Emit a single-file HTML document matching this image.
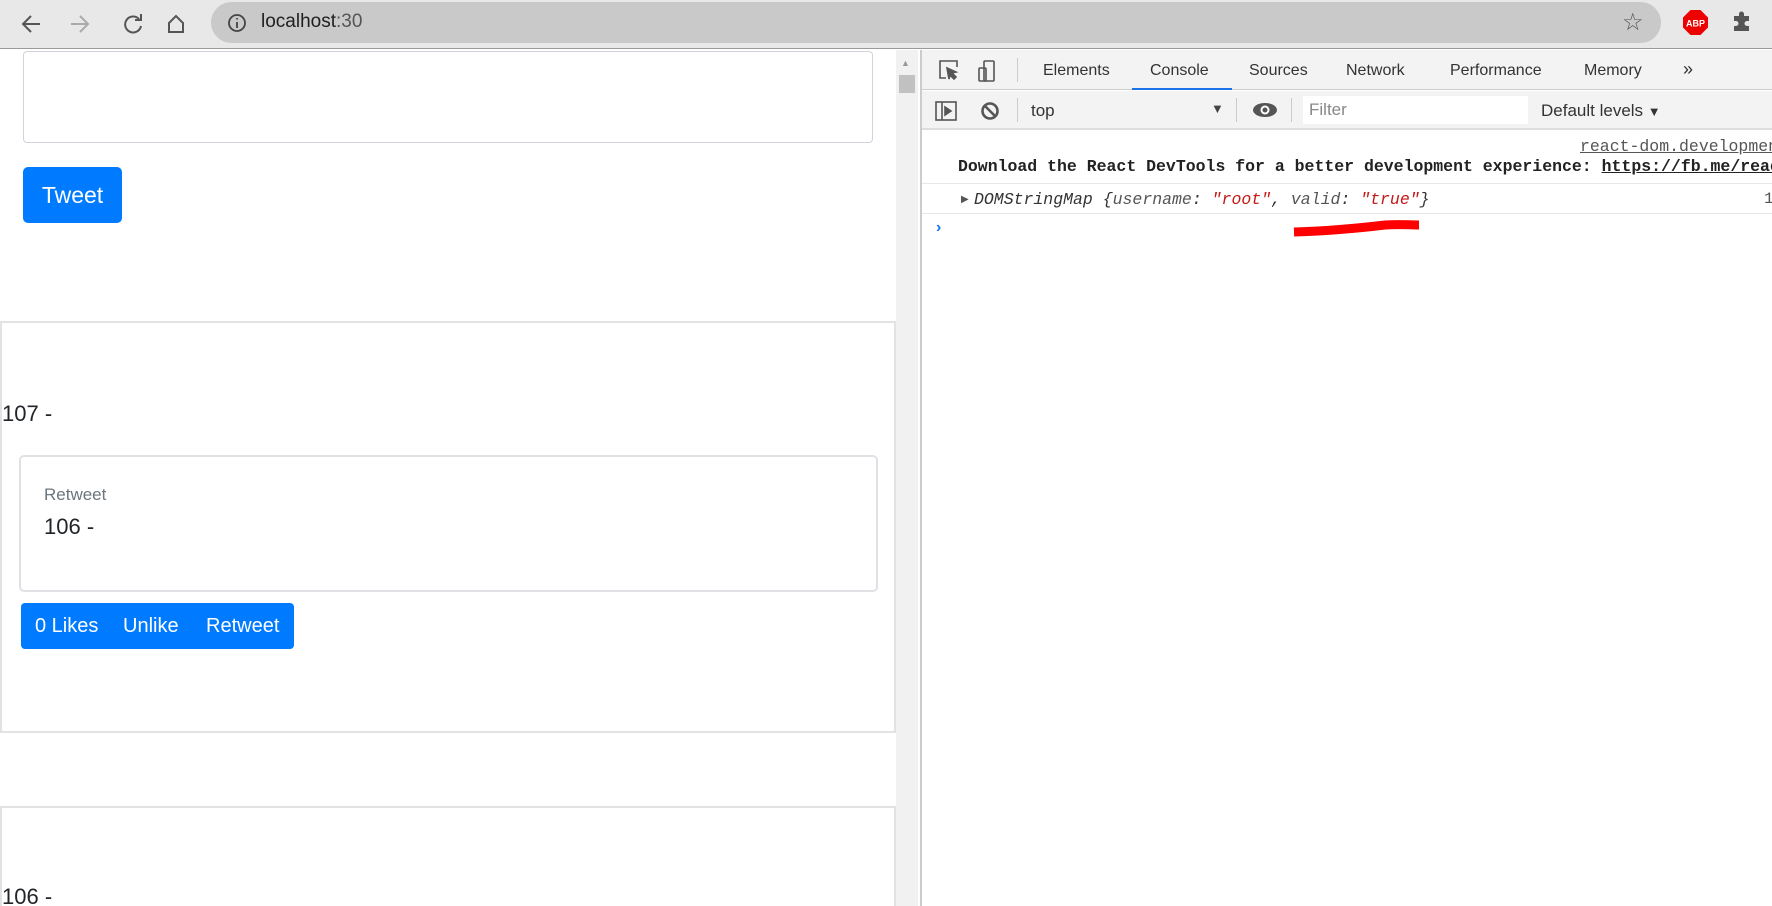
<!DOCTYPE html>
<html style="overflow:hidden"><head><meta charset="utf-8"><style>
*{box-sizing:border-box;margin:0;padding:0}
html,body{width:1772px;height:906px;overflow:hidden}
body{background:#fff;font-family:"Liberation Sans",sans-serif;position:relative}
.a{position:absolute}
.mono{font-family:"Liberation Mono",monospace}
.tab{position:absolute;top:62px;font-size:16px;color:#333}
</style></head><body>
<div class="a" style="left:0;top:0;width:1772px;height:49px;background:#e8e8e8;border-bottom:1px solid #9a9a9a"></div>
<svg class="a" style="left:20px;top:11px" width="200" height="26" viewBox="0 0 200 26" fill="none" stroke="#555" stroke-width="2">
<path d="M20 13H4M11 5L3 13l8 8"/>
<path d="M51 13h16M60 5l8 8-8 8" stroke="#aaa"/>
<path d="M119 8a8 8 0 1 0 2 7" /><path d="M121 3v6h-6" />
<path d="M149 12l7-7 7 7v9h-14z"/>
</svg>
<div class="a" style="left:211px;top:2px;width:1450px;height:41px;background:#c9c9c9;border-radius:21px"></div>
<svg class="a" style="left:227px;top:13px" width="20" height="20" viewBox="0 0 20 20" fill="none" stroke="#444" stroke-width="1.8"><circle cx="10" cy="10" r="8"/><path d="M10 9v6M10 5v1.5"/></svg>
<div class="a" style="left:261px;top:11px;font-size:19px;color:#202020">localhost<span style="color:#555">:30</span></div>
<div class="a" style="left:1622px;top:8px;font-size:24px;color:#555">☆</div>
<svg class="a" style="left:1683px;top:10px" width="25" height="25" viewBox="0 0 25 25"><polygon points="7.5,0 17.5,0 25,7.5 25,17.5 17.5,25 7.5,25 0,17.5 0,7.5" fill="#e00"/><text x="12.5" y="16.5" font-size="9" font-weight="bold" fill="#fff" text-anchor="middle" font-family="Liberation Sans">ABP</text></svg>
<svg class="a" style="left:1730px;top:10px" width="24" height="24" viewBox="0 0 24 24" fill="#555"><path d="M4 6h5V4a2.5 2.5 0 0 1 5 0v2h5v5h-2a2.5 2.5 0 0 0 0 5h2v5H4v-5h2a2.5 2.5 0 0 0 0-5H4z"/></svg>

<div class="a" style="left:23px;top:51px;width:850px;height:92px;border:1px solid #ced4da;border-radius:4px"></div>
<div class="a" style="left:23px;top:167px;width:99px;height:56px;background:#007bff;border-radius:5px;color:#fff;font-size:23px;line-height:56px;text-align:center">Tweet</div>
<div class="a" style="left:0;top:321px;width:896px;height:412px;border:2px solid #e2e2e2"></div>
<div class="a" style="left:2px;top:401px;font-size:22px;color:#212529">107 -</div>
<div class="a" style="left:19px;top:455px;width:859px;height:137px;border:2px solid #dfe1e5;border-radius:5px"></div>
<div class="a" style="left:44px;top:485px;font-size:17px;color:#6c757d">Retweet</div>
<div class="a" style="left:44px;top:514px;font-size:22px;color:#212529">106 -</div>
<div class="a" style="left:21px;top:603px;width:273px;height:46px;background:#007bff;border-radius:4px;color:#fff;font-size:20px;line-height:46px;white-space:nowrap">
<span class="a" style="left:14px">0 Likes</span><span class="a" style="left:102px">Unlike</span><span class="a" style="left:185px">Retweet</span></div>
<div class="a" style="left:0;top:806px;width:896px;height:100px;border:2px solid #e2e2e2;border-bottom:none"></div>
<div class="a" style="left:2px;top:884px;font-size:22px;color:#212529">106 -</div>
<div class="a" style="left:896px;top:50px;width:22px;height:856px;background:#f1f1f1"></div>
<div class="a" style="left:901px;top:58px;font-size:9px;color:#999">▲</div>
<div class="a" style="left:899px;top:75px;width:16px;height:18px;background:#c1c1c1"></div>

<div class="a" style="left:920px;top:50px;width:2px;height:856px;background:#ccc"></div>
<div class="a" style="left:922px;top:50px;width:850px;height:40px;background:#f3f3f3;border-bottom:1px solid #ccc"></div>
<svg class="a" style="left:937px;top:58px" width="60" height="26" viewBox="0 0 60 26" fill="none" stroke="#555" stroke-width="1.6">
<path d="M9 20H3V3h17v6"/><path d="M10 10l9 4-4 1 4 4-2 2-4-4-1 4z" fill="#555"/>
<rect x="47" y="3" width="10" height="20" rx="1"/><rect x="42" y="10" width="7" height="13" rx="1"/>
</svg>
<div class="a" style="left:1017px;top:58px;width:1px;height:24px;background:#ccc"></div>
<div class="tab" style="left:1043px">Elements</div>
<div class="tab" style="left:1150px">Console</div>
<div class="tab" style="left:1249px">Sources</div>
<div class="tab" style="left:1346px">Network</div>
<div class="tab" style="left:1450px">Performance</div>
<div class="tab" style="left:1584px">Memory</div>
<div class="tab" style="left:1683px;font-size:18px;top:59px">»</div>
<div class="a" style="left:1132px;top:88px;width:100px;height:2px;background:#1a73e8"></div>
<div class="a" style="left:922px;top:91px;width:850px;height:39px;background:#f3f3f3;border-bottom:2px solid #ddd"></div>
<svg class="a" style="left:934px;top:99px" width="70" height="24" viewBox="0 0 70 24" fill="none" stroke="#555" stroke-width="1.6">
<rect x="2" y="3" width="20" height="18"/><path d="M8 3v18"/><path d="M11 8l6 4-6 4z" fill="#555"/>
<circle cx="56" cy="12" r="7.5" stroke-width="2.6"/><path d="M50.5 6.5l11 11" stroke-width="2.6"/>
</svg>
<div class="a" style="left:1017px;top:98px;width:1px;height:24px;background:#ccc"></div>
<div class="a" style="left:1031px;top:101px;font-size:17px;color:#333">top</div>
<div class="a" style="left:1211px;top:101px;font-size:13px;color:#444">▼</div>
<div class="a" style="left:1236px;top:98px;width:1px;height:24px;background:#ccc"></div>
<svg class="a" style="left:1252px;top:101px" width="26" height="18" viewBox="0 0 26 18"><ellipse cx="13" cy="9" rx="12" ry="7" fill="#555"/><circle cx="13" cy="9" r="4.5" fill="#fff"/><circle cx="13" cy="9" r="2.5" fill="#555"/></svg>
<div class="a" style="left:1291px;top:98px;width:1px;height:24px;background:#ccc"></div>
<div class="a" style="left:1303px;top:96px;width:225px;height:28px;background:#fff;padding-left:6px;font-size:17px;color:#888;line-height:28px">Filter</div>
<div class="a" style="left:1541px;top:101px;font-size:17px;color:#333">Default levels <span style="font-size:13px">▼</span></div>

<div class="a" style="left:922px;top:130px;width:850px;height:776px;overflow:hidden">
<div class="a mono" style="left:658px;top:7px;font-size:16.5px;color:#555;text-decoration:underline;white-space:nowrap">react-dom.development.js</div>
<div class="a mono" style="left:36px;top:27px;font-size:16.5px;font-weight:bold;color:#222;white-space:nowrap">Download the React DevTools for a better development experience: <span style="text-decoration:underline">https://fb.me/react-devtools</span></div>
<div class="a" style="left:0;top:53px;width:850px;height:1px;background:#e6e6e6"></div>
<div class="a" style="left:39px;top:64px;font-size:10px;color:#555">▶</div>
<div class="a mono" style="left:52px;top:60px;font-size:16.5px;font-style:italic;color:#333;white-space:nowrap">DOMStringMap {<span style="color:#555">username</span>: <span style="color:#c41a16">"root"</span>, <span style="color:#555">valid</span>: <span style="color:#c41a16">"true"</span>}</div>
<div class="a mono" style="left:842px;top:60px;font-size:16px;color:#555">1</div>
<div class="a" style="left:0;top:83px;width:850px;height:1px;background:#e6e6e6"></div>
<div class="a" style="left:14px;top:89px;font-size:16px;color:#1a73e8;font-weight:bold">›</div>
<svg class="a" style="left:368px;top:88px" width="135" height="20" viewBox="0 0 135 20"><path d="M4 14C40 13 70 10 95 7c15-1 25 0 34 0" stroke="#f00" stroke-width="9" fill="none" stroke-linecap="butt"/></svg>
</div>
</body></html>
